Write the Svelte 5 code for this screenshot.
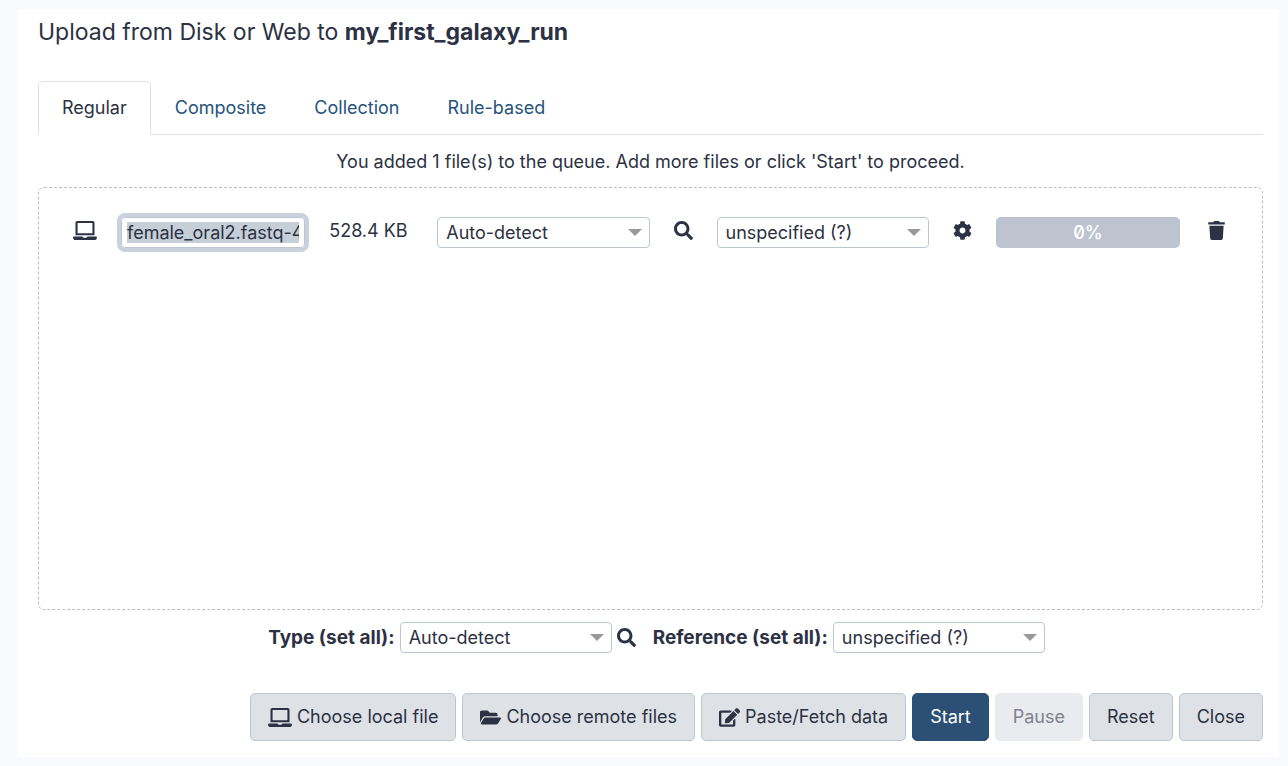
<script>
  import { onMount } from 'svelte';

  const icons = {
    laptop: {
      box: '0 0 640 512',
      d: 'M624 416H381.540c-.74 19.810-14.710 32-32.740 32H288c-18.690 0-33.020-17.470-32.770-32H16c-8.800 0-16 7.200-16 16v16c0 35.200 28.800 64 64 64h512c35.200 0 64-28.800 64-64v-16c0-8.800-7.200-16-16-16zM576 48c0-26.400-21.600-48-48-48H112C85.600 0 64 21.600 64 48v336h512V48zm-56 280H120V56h400v272z'
    },
    search: {
      box: '0 0 512 512',
      d: 'M505 442.700L405.300 343c-4.500-4.500-10.600-7-17-7H372c27.600-35.300 44-79.700 44-128C416 93.100 322.900 0 208 0S0 93.100 0 208s93.100 208 208 208c48.300 0 92.700-16.400 128-44v16.300c0 6.400 2.500 12.500 7 17l99.700 99.700c9.400 9.400 24.600 9.400 33.900 0l28.300-28.300c9.400-9.400 9.400-24.600.1-34zM208 336c-70.700 0-128-57.200-128-128 0-70.700 57.200-128 128-128 70.700 0 128 57.200 128 128 0 70.700-57.200 128-128 128z'
    },
    cog: {
      box: '0 0 512 512',
      d: 'M487.400 315.700l-42.600-24.600c4.300-23.200 4.300-47 0-70.200l42.600-24.600c4.900-2.800 7.100-8.600 5.500-14-11.100-35.600-30-67.800-54.700-94.600-3.800-4.100-10-5.100-14.800-2.300L380.800 110c-17.900-15.400-38.500-27.300-60.800-35.100V25.800c0-5.600-3.900-10.500-9.400-11.700-36.700-8.200-74.300-7.800-109.200 0-5.500 1.200-9.400 6.100-9.400 11.700V75c-22.200 7.900-42.800 19.800-60.800 35.100L88.700 85.500c-4.900-2.800-11-1.900-14.800 2.300-24.700 26.700-43.600 58.900-54.700 94.600-1.700 5.400.6 11.200 5.500 14L67.300 221c-4.300 23.200-4.300 47 0 70.200l-42.600 24.600c-4.900 2.800-7.100 8.600-5.500 14 11.100 35.600 30 67.800 54.700 94.600 3.800 4.100 10 5.100 14.800 2.300l42.600-24.600c17.900 15.400 38.500 27.300 60.800 35.100v49.200c0 5.600 3.900 10.500 9.400 11.700 36.700 8.200 74.300 7.800 109.200 0 5.500-1.200 9.400-6.100 9.400-11.700v-49.200c22.200-7.900 42.800-19.800 60.800-35.100l42.600 24.600c4.900 2.800 11 1.900 14.800-2.300 24.700-26.700 43.600-58.900 54.700-94.600 1.500-5.500-.7-11.300-5.600-14.100zM256 336c-44.100 0-80-35.900-80-80s35.900-80 80-80 80 35.900 80 80-35.900 80-80 80z'
    },
    trash: {
      box: '0 0 448 512',
      d: 'M432 32H312l-9.400-18.700A24 24 0 0 0 281.100 0H166.800a23.720 23.720 0 0 0-21.400 13.300L136 32H16A16 16 0 0 0 0 48v32a16 16 0 0 0 16 16h416a16 16 0 0 0 16-16V48a16 16 0 0 0-16-16zM53.200 467a48 48 0 0 0 47.900 45h245.800a48 48 0 0 0 47.900-45L416 128H32z'
    },
    folder: {
      box: '0 0 576 512',
      d: 'M572.694 292.093L500.270 416.248A63.997 63.997 0 0 1 444.989 448H45.025c-18.523 0-30.064-20.093-20.731-36.093l72.424-124.155A64 64 0 0 1 152 256h399.964c18.523 0 30.064 20.093 20.730 36.093zM152 224h328v-48c0-26.510-21.490-48-48-48H272l-64-64H48C21.490 64 0 85.490 0 112v278.046l69.077-118.418C86.214 242.250 117.989 224 152 224z'
    },
    edit: {
      box: '0 0 576 512',
      d: 'M402.600 83.200l90.200 90.200c3.800 3.800 3.800 10 0 13.800L274.400 405.600l-92.800 10.300c-12.400 1.400-22.900-9.100-21.500-21.500l10.300-92.800L388.800 83.200c3.800-3.800 10-3.800 13.800 0zm162-22.900l-48.800-48.800c-15.200-15.200-39.900-15.200-55.200 0l-35.400 35.400c-3.800 3.800-3.800 10 0 13.800l90.200 90.200c3.800 3.800 10 3.800 13.800 0l35.400-35.400c15.200-15.300 15.200-40 0-55.200zM384 346.200V448H64V128h229.800c3.200 0 6.200-1.300 8.500-3.500l40-40c7.600-7.600 2.200-20.500-8.500-20.500H48C21.500 64 0 85.500 0 112v352c0 26.500 21.500 48 48 48h352c26.500 0 48-21.500 48-48V306.200c0-10.700-12.900-16-20.500-8.500l-40 40c-2.200 2.300-3.500 5.300-3.500 8.500z'
    }
  };

  const tabs = ['Regular', 'Composite', 'Collection', 'Rule-based'];
  let active = $state('Regular');
  let fileName = $state('female_oral2.fastq-4');
  let nameInput;

  onMount(() => {
    nameInput.focus();
    nameInput.select();
    nameInput.scrollLeft = 0;
  });
</script>

{#snippet icon(name)}
  <svg class="icon {name}" viewBox={icons[name].box} aria-hidden="true"><path d={icons[name].d} /></svg>
{/snippet}

{#snippet picker(id, value, label)}
  <span class="picker">
    <select {id} aria-label={label}><option>{value}</option></select>
  </span>
{/snippet}

<main>
  <h1>Upload from Disk or Web to <b>my_first_galaxy_run</b></h1>

  <nav>
    {#each tabs as tab}
      <a href="#{tab}" class:active={active === tab} onclick={() => (active = tab)}>{tab}</a>
    {/each}
  </nav>

  <p class="message">You added 1 file(s) to the queue. Add more files or click 'Start' to proceed.</p>

  <section class="queue">
    <div class="row">
      {@render icon('laptop')}
      <input class="name" type="text" aria-label="Name" spellcheck="false" bind:this={nameInput} bind:value={fileName} />
      <span class="size">528.4 KB</span>
      {@render picker('row-type', 'Auto-detect', 'Type')}
      <button class="plain" aria-label="Search type">{@render icon('search')}</button>
      {@render picker('row-reference', 'unspecified (?)', 'Reference')}
      <button class="plain" aria-label="Settings">{@render icon('cog')}</button>
      <div class="progress" role="progressbar" aria-label="Progress" aria-valuenow="0" aria-valuemin="0" aria-valuemax="100">0%</div>
      <button class="plain" aria-label="Remove">{@render icon('trash')}</button>
    </div>
  </section>

  <div class="defaults">
    <label for="all-type">Type (set all):</label>
    {@render picker('all-type', 'Auto-detect')}
    <button class="plain" aria-label="Search type for all">{@render icon('search')}</button>
    <label class="second" for="all-reference">Reference (set all):</label>
    {@render picker('all-reference', 'unspecified (?)')}
  </div>

  <footer>
    <button>{@render icon('laptop')}Choose local file</button>
    <button>{@render icon('folder')}Choose remote files</button>
    <button>{@render icon('edit')}Paste/Fetch data</button>
    <button class="primary">Start</button>
    <button disabled>Pause</button>
    <button>Reset</button>
    <button>Close</button>
  </footer>
</main>

<style>
  :global(body) {
    background: #f8fafd;
  }

  main,
  main * {
    box-sizing: border-box;
  }

  main {
    display: flex;
    flex-direction: column;
    min-height: calc(100vh - 18px);
    margin: 9px 9px 9px 18px;
    padding: 8px 16px 16px 20px;
    background: #fff;
    color: #2c3143;
    font: 18px/30px Inter, 'Liberation Sans', sans-serif;
  }

  h1 {
    margin: 0 0 34px;
    font-size: 23px;
    font-weight: 400;
    line-height: 30px;
  }

  nav {
    display: flex;
    border-bottom: 1px solid #dee2e6;
  }

  nav a {
    margin-bottom: -1px;
    padding: 11px 23px;
    border: 1px solid transparent;
    border-radius: 5px 5px 0 0;
    color: #25537b;
    line-height: 30px;
    text-decoration: none;
  }

  nav a.active {
    border-color: #dee2e6 #dee2e6 #fff;
    background: #fff;
    color: #2c3143;
  }

  .message {
    margin: 12px 0 10px;
    text-align: center;
  }

  .queue {
    flex: 1;
    padding: 28px 34px;
    border: 1px dashed #b9c0cc;
    border-radius: 6px;
  }

  .row {
    display: grid;
    grid-template-columns: 24px 184fr 84px 212fr 19px 212fr 19px 184fr 24px;
    gap: 24px;
    align-items: center;
  }

  .row .icon {
    margin-bottom: 3px;
  }

  .icon {
    display: block;
    width: 19px;
    height: 19px;
    fill: currentColor;
  }

  .laptop {
    width: 24px;
  }

  .folder,
  .edit {
    width: 21px;
  }

  .row .trash {
    margin: 0 auto 3px;
  }

  .size {
    margin-bottom: 2px;
    white-space: nowrap;
  }

  .name {
    width: 100%;
    height: 31px;
    padding: 0 5px;
    border: 1px solid #bdc6d0;
    border-radius: 4px;
    outline: 4px solid #c9d2dc;
    color: inherit;
    font: inherit;
  }

  .name::selection {
    background: #c6cfd8;
    color: #2c3143;
  }

  .picker {
    position: relative;
    display: block;
    min-width: 212px;
  }

  .picker::after {
    position: absolute;
    top: 12px;
    right: 8px;
    border: 7px solid transparent;
    border-top-color: #999;
    border-bottom: 0;
    content: '';
    pointer-events: none;
  }

  select {
    display: block;
    width: 100%;
    height: 31px;
    padding: 0 8px;
    border: 1px solid #bdc6d0;
    border-radius: 4px;
    background: #fff;
    color: inherit;
    font: inherit;
    appearance: none;
  }

  .plain {
    display: block;
    padding: 0;
    border: 0;
    background: none;
    color: inherit;
  }

  .progress {
    border-radius: 5px;
    background: #bdc4cf;
    color: #fff;
    font-feature-settings: 'zero';
    font-weight: 500;
    line-height: 31px;
    text-align: center;
  }

  .defaults {
    display: flex;
    justify-content: center;
    align-items: center;
    gap: 5px;
    padding: 12px 0 40px 12px;
  }

  label {
    font-size: 19px;
    font-weight: 700;
  }

  .second {
    margin-left: 12px;
  }

  footer {
    display: flex;
    justify-content: flex-end;
    gap: 6px;
  }

  footer button {
    display: flex;
    align-items: center;
    gap: 5px;
    height: 48px;
    padding: 0 17px;
    border: 1px solid #bdc6d0;
    border-radius: 5px;
    background: #dee2e6;
    color: #2c3143;
    font: inherit;
  }

  footer .primary {
    border-color: #2c5075;
    background: #2c5075;
    color: #fff;
  }

  footer button:disabled {
    border-color: #e9ebef;
    background: #e9ebef;
    color: #80838e;
  }
</style>
